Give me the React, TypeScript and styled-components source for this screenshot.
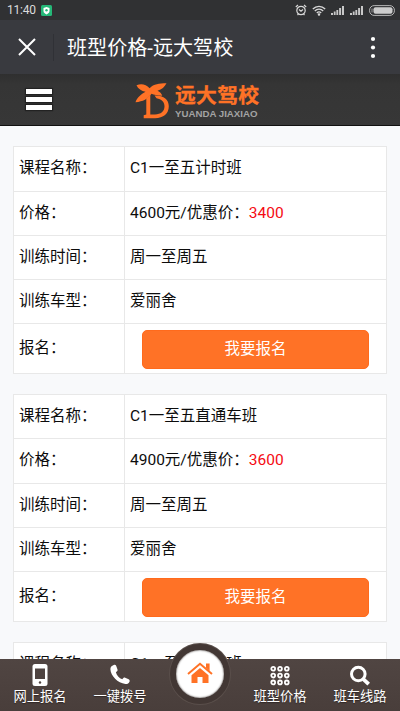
import React from 'react';
import styled, { createGlobalStyle } from 'styled-components';

const Global = createGlobalStyle`
  * { box-sizing: border-box; }
  html, body { margin: 0; padding: 0; overflow: hidden; }
  body { background: #f8f9fb; font-family: Roboto, "Noto Sans CJK SC", sans-serif; color: #0c0c0c; }
`;

const Screen = styled.div`
  width: 400px;
  height: 711px;
  display: flex;
  flex-direction: column;
  overflow: hidden;
  background: #f8f9fb;
`;

const StatusBar = styled.div`
  height: 20px;
  flex: none;
  display: flex;
  align-items: center;
  justify-content: space-between;
  padding: 0 5px 0 7px;
  background: #303133;
  color: #dcdcdc;
  font-size: 12px;
  line-height: 20px;
`;

const StatusGroup = styled.div<{ $gap: number }>`
  display: flex;
  align-items: center;
  gap: ${(p) => p.$gap}px;
  svg { display: block; }
`;

const Clock = styled.span`
  width: 28px;
  letter-spacing: -0.2px;
  white-space: nowrap;
`;

const TitleBar = styled.header`
  height: 54px;
  flex: none;
  display: flex;
  align-items: center;
  padding: 0 24px 0 18px;
  background: #393a3f;
  color: #fff;
  svg { display: block; }
`;

const Divider = styled.span`
  width: 1px;
  height: 27px;
  margin: 0 13px 0 17px;
  background: #303136;
`;

const Title = styled.h1`
  flex: 1;
  margin: 1px 0 0;
  font-size: 20.1px;
  font-weight: 400;
  line-height: 28px;
`;

const SiteHeader = styled.div`
  height: 52px;
  flex: none;
  display: flex;
  align-items: flex-start;
  background: linear-gradient(#2f2f2f, #353535 20%, #373737);
  border-bottom: 1px solid #111;
`;

const MenuButton = styled.div`
  display: flex;
  flex-direction: column;
  gap: 3px;
  margin: 15px 0 0 26px;
  width: 26px;
`;

const MenuLine = styled.span`
  height: 5px;
  background: #fff;
  box-shadow: 0 0 1px 1px #222;
`;

const Logo = styled.div`
  display: flex;
  margin: 9px 0 0 83px;
  svg { display: block; flex: none; }
`;

const LogoWords = styled.div`
  margin: 0 0 0 5px;
  white-space: nowrap;
`;

const LogoName = styled.div`
  color: #ff7226;
  font: 700 20.8px/22px "Noto Sans CJK SC", sans-serif;
  letter-spacing: 0.3px;
  -webkit-text-stroke: 0.3px #ff7226;
`;

const LogoLatin = styled.div`
  margin-top: 3px;
  color: #a3a3a3;
  font: 700 9.7px/11px "Liberation Sans", sans-serif;
`;

const Courses = styled.main`
  flex: 1;
  min-height: 0;
  overflow: hidden;
  display: flex;
  flex-direction: column;
  gap: 20px;
  padding: 20.4px 13px 0;
`;

const Course = styled.section`
  flex: none;
  height: 227.8px;
  background: #fff;
  border: 1px solid #e8e8e8;
  display: grid;
  grid-template-rows: 43.2px repeat(3, 44.3px) 1fr;
`;

const Row = styled.div`
  display: grid;
  grid-template-columns: 110.5px 1fr;
  font-size: 15.5px;
  line-height: 24px;
  & + & { border-top: 1px solid #e8e8e8; }
`;

const Label = styled.div<{ $low?: boolean }>`
  border-right: 1px solid #e8e8e8;
  padding: ${(p) => (p.$low ? 12 : 9)}px 0 0 5px;
`;

const Value = styled.div`
  padding: 9px 0 0 5.5px;
  white-space: nowrap;
`;

const Price = styled.span`
  color: #f50a12;
`;

const Action = styled.div`
  padding: 6px 17px 0 17.5px;
`;

const SignUp = styled.button`
  display: block;
  width: 100%;
  height: 39px;
  padding: 0 0 5px;
  border: 1px solid #ff6a1c;
  border-radius: 5px;
  background: #ff7226;
  color: #fff;
  font: 400 15.5px/32px "Noto Sans CJK SC", sans-serif;
`;

const BottomNav = styled.nav`
  position: relative;
  z-index: 1;
  height: 52px;
  flex: none;
  display: grid;
  grid-template-columns: repeat(5, 80px);
  background: linear-gradient(#504542, #493e3b);
  color: #fff;
`;

const NavItem = styled.div`
  display: flex;
  flex-direction: column;
  align-items: center;
  padding-top: 5px;
  font-size: 13.3px;
  line-height: 18px;
  text-shadow: 0 1px 1px #302725;
  svg { display: block; margin-bottom: 2px; }
`;

const HomeButton = styled.div`
  position: absolute;
  left: 170px;
  top: -15px;
  width: 60px;
  height: 60px;
  display: flex;
  align-items: center;
  justify-content: center;
  border: 6px solid #423734;
  border-radius: 50%;
  background: #fff;
  box-shadow: 0 0 0 1px #5a4f4b, inset 0 0 2px #332b28;
  svg { display: block; margin-top: -3px; }
`;

const Signal = () => (
  <svg width="14" height="10" viewBox="0 0 14 10" fill="#c8c8c8">
    <path d="M0 8h2v2H0zM2.8 6.5h1.8V10H2.8zM5.4 5h1.8v5H5.4zM8.1 3h2v7h-2zM11 1h2v9h-2z" />
  </svg>
);

const LogoMark = () => (
  <svg width="35" height="37" viewBox="0 0 35 37">
    <g fill="#ff7226">
      <path d="M1.500 2.200C6 .3 11 1 14.600 5.200C19 1 24 .3 31.500 .3C29.500 4 27 6.500 22.500 7.800C25 9 26.500 10.500 27.300 12.800C22 12.500 19 12 16.500 10.800C13 15.800 8 18.800 .5 19.200C2 15 6 11 10.500 8.800C6.500 7.800 3 5.800 1.500 2.200Z" />
      <path d="M11.300 15.500 15.300 12V31.500H20c5.800 0 9.500-3.200 9.500-8.200 0-4.300-3-7-8-8l-2-2.800c9.200-.3 14.300 4 14.300 10.800C33.800 30.500 28.500 35.200 20 35.200H8.700V32.300L11.300 31.500Z" />
    </g>
  </svg>
);

const PhoneIcon = () => (
  <svg width="16" height="22" viewBox="0 0 16 22">
    <rect x=".5" width="15" height="22" rx="2.5" fill="#fff" />
    <path fill="#4e4340" d="M3 4.500h10v10.500H3z" />
    <circle cx="8" cy="18.500" r="1.200" fill="#4e4340" />
  </svg>
);

const CallIcon = () => (
  <svg width="20" height="22" viewBox="0 0 20 22">
    <path fill="#fff" d="M3.700 1.100C5.300.5 6 1 6.800 3.400l.7 2c.3 1.100-.2 1.700-1.600 2.800.7 3.200 3.200 5.900 6.400 7.100 1.200-1.600 1.800-2 2.900-1.500l2.900 1.200c1.600.8 1.900 1.500 1.400 2.700-.7 1.600-2.200 2.500-4.100 2.300C7.800 19.200.7 11.700.4 5.300.3 3.300 1.700 1.700 3.700 1.100Z" />
  </svg>
);

const GridIcon = () => (
  <svg width="20" height="22" viewBox="0 0 20 22" fill="none" stroke="#fff" strokeWidth="1.8">
    {[4.8, 11.6, 18.4].flatMap((y) =>
      [3.2, 10, 16.8].map((x) => <circle key={`${x}-${y}`} cx={x} cy={y} r="1.9" />),
    )}
  </svg>
);

const SearchIcon = () => (
  <svg width="22" height="22" viewBox="0 0 22 22" fill="none" stroke="#fff">
    <circle cx="9.3" cy="10" r="6.8" strokeWidth="3" />
    <path d="m14.3 15.1 5.4 5.1" strokeWidth="3.8" />
  </svg>
);

const HomeIcon = () => (
  <svg width="28" height="24" viewBox="0 0 28 24">
    <path d="M2 13 14 2.8 26 13" fill="none" stroke="#ff7226" strokeWidth="2" />
    <path fill="#ff7226" d="M20 2.500h3.600V10L20 6.700zM5.500 14.300l8.500-7.300 8.500 7.300V22h-6v-6h-5v6h-6z" />
  </svg>
);

const courses = [
  { name: 'C1一至五计时班', price: '4600', sale: '3400' },
  { name: 'C1一至五直通车班', price: '4900', sale: '3600' },
  { name: 'C1一至五计时班', price: '4600', sale: '3400' },
];

export default function App() {
  return (
    <>
      <Global />
      <Screen>
        <StatusBar>
          <StatusGroup $gap={6}>
            <Clock>11:40</Clock>
            <svg width="11" height="11" viewBox="0 0 11 11">
              <rect width="11" height="11" rx="1.5" fill="#25b878" />
              <path fill="#fff" d="m5.5 2 3 1v3c0 1.7-1.3 2.7-3 3.4C3.800 8.700 2.500 7.700 2.500 6V3z" />
              <circle cx="5.500" cy="5.300" r="1.200" fill="#25b878" />
            </svg>
          </StatusGroup>
          <StatusGroup $gap={5}>
            <svg width="12" height="12" viewBox="0 0 12 12" fill="none" stroke="#d8d8d8" strokeWidth="1.2">
              <circle cx="6" cy="6.500" r="4.200" />
              <path d="M.8 3 3 1m6 0 2.200 2M4 5.500l2 1.700 2-1.700M2.500 11l1-1m6 1-1-1" />
            </svg>
            <svg width="14" height="11" viewBox="0 0 14 11" fill="none" stroke="#d8d8d8" strokeWidth="1.300">
              <path d="M.8 4c3.500-3.600 8.900-3.600 12.400 0M2.800 6c2.400-2.400 6-2.400 8.400 0M4.800 8c1.300-1.300 3.100-1.300 4.400 0" />
              <circle cx="7" cy="9.500" r=".6" fill="#d8d8d8" />
            </svg>
            <Signal />
            <Signal />
            <svg width="26" height="11" viewBox="0 0 26 11">
              <rect x=".6" y=".6" width="24.800" height="9.800" rx="4.500" fill="none" stroke="#b5b5b5" />
              <path d="M3 3.500v4" stroke="#999" />
              <rect x="4.500" y="2.300" width="19" height="6.400" rx="2" fill="#ccc" />
            </svg>
          </StatusGroup>
        </StatusBar>

        <TitleBar>
          <svg width="18" height="18" viewBox="0 0 18 18" stroke="#fff" strokeWidth="2">
            <path d="m1 1 16 16M17 1 1 17" />
          </svg>
          <Divider />
          <Title>班型价格-远大驾校</Title>
          <svg width="6" height="23" viewBox="0 0 6 23" fill="#fff">
            <circle cx="3" cy="3" r="2.100" />
            <circle cx="3" cy="11.500" r="2.100" />
            <circle cx="3" cy="20" r="2.100" />
          </svg>
        </TitleBar>

        <SiteHeader>
          <MenuButton>
            <MenuLine />
            <MenuLine />
            <MenuLine />
          </MenuButton>
          <Logo>
            <LogoMark />
            <LogoWords>
              <LogoName>远大驾校</LogoName>
              <LogoLatin>YUANDA JIAXIAO</LogoLatin>
            </LogoWords>
          </Logo>
        </SiteHeader>

        <Courses>
          {courses.map((c, i) => (
            <Course key={i}>
              <Row><Label>课程名称：</Label><Value>{c.name}</Value></Row>
              <Row><Label>价格：</Label><Value>{c.price}元/优惠价：<Price>{c.sale}</Price></Value></Row>
              <Row><Label>训练时间：</Label><Value>周一至周五</Value></Row>
              <Row><Label>训练车型：</Label><Value>爱丽舍</Value></Row>
              <Row><Label $low>报名：</Label><Action><SignUp>我要报名</SignUp></Action></Row>
            </Course>
          ))}
        </Courses>

        <BottomNav>
          <NavItem><PhoneIcon />网上报名</NavItem>
          <NavItem><CallIcon />一键拨号</NavItem>
          <span />
          <NavItem><GridIcon />班型价格</NavItem>
          <NavItem><SearchIcon />班车线路</NavItem>
          <HomeButton><HomeIcon /></HomeButton>
        </BottomNav>
      </Screen>
    </>
  );
}
